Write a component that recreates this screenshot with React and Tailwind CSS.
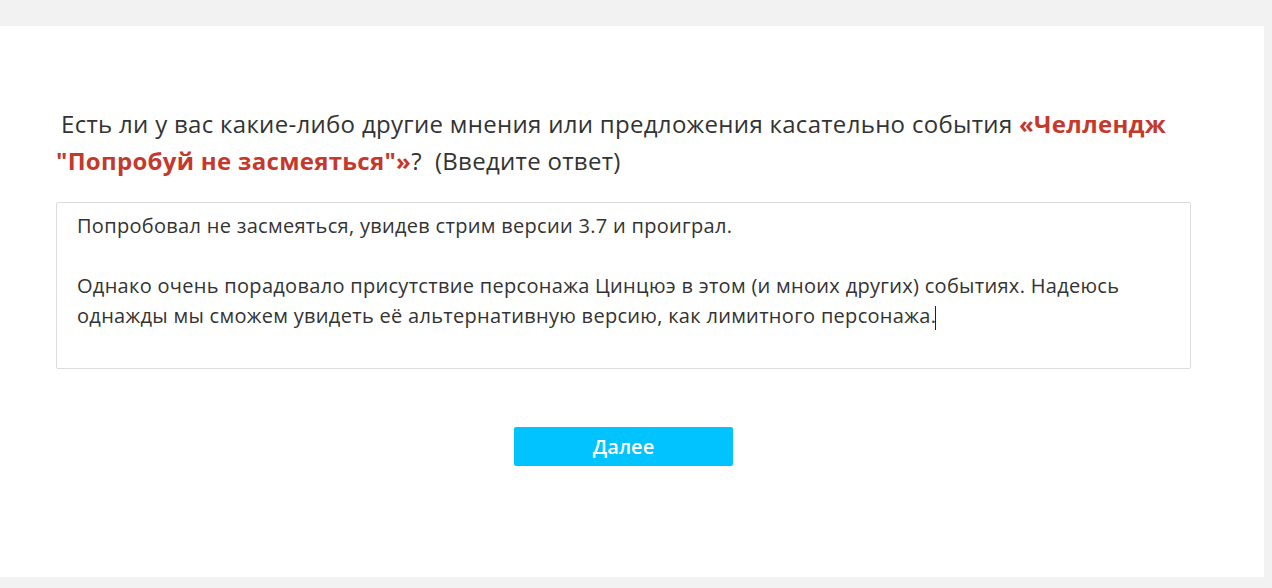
export default function App() {
  return (
    <div className="w-[1272px] h-[588px] bg-[#f2f2f2] pt-[26px] pr-[8px] pb-[11px]" style={{ fontFamily: '"Open Sans", "Noto Sans", sans-serif' }}>
      <div className="bg-white h-full pl-[56px] pr-[73px] pt-[79px]">
        <p className="text-[24px] leading-[37px] tracking-[0.3px] text-[#333333] indent-[5px]">
          Есть ли у вас какие-либо другие мнения или предложения касательно события{" "}
          <span className="font-bold text-[#c5392d]">«Челлендж "Попробуй не засмеяться"»</span>
          ?&nbsp; (Введите ответ)
        </p>
        <div className="mt-[23px] h-[167px] border border-[#dcdcdc] rounded-[2px] pl-[20px] pr-[16px] pt-[8px] text-[20px] leading-[30px] tracking-[0.3px] text-[#333333]">
          <p>Попробовал не засмеяться, увидев стрим версии 3.7 и проиграл.</p>
          <p>&nbsp;</p>
          <p>
            Однако очень порадовало присутствие персонажа Цинцюэ в этом (и мноих других) событиях. Надеюсь однажды мы сможем увидеть её альтернативную версию, как лимитного персонажа.
            <span className="inline-block w-px h-[24px] bg-[#222] align-middle -ml-px"></span>
          </p>
        </div>
        <div className="flex justify-center mt-[58px]">
          <button className="w-[219px] h-[39px] rounded-[2px] bg-[#00c3ff] text-white text-[20px] font-semibold">
            Далее
          </button>
        </div>
      </div>
    </div>
  );
}
